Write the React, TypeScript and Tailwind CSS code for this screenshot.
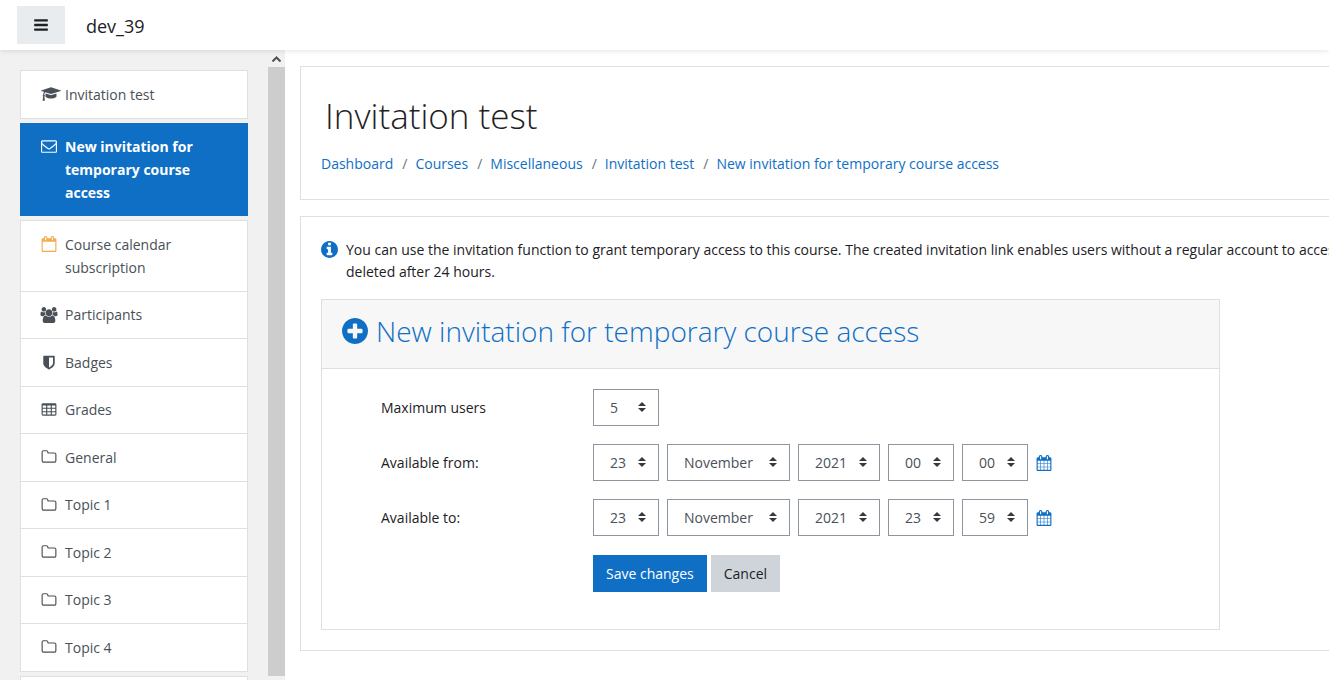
import type { ReactNode } from 'react'
import clsx from 'clsx'

// Font Awesome 4 outlines, drawn on a 1792 unit em
const ICONS = {
  bars: 'M1664 1344v128q0 26-19 45t-45 19h-1408q-26 0-45-19t-19-45v-128q0-26 19-45t45-19h1408q26 0 45 19t19 45zm0-512v128q0 26-19 45t-45 19h-1408q-26 0-45-19t-19-45v-128q0-26 19-45t45-19h1408q26 0 45 19t19 45zm0-512v128q0 26-19 45t-45 19h-1408q-26 0-45-19t-19-45v-128q0-26 19-45t45-19h1408q26 0 45 19t19 45z',
  cap: 'M1774 836l18 316q4 69-82 128t-235 93.5-323 34.5-323-34.5-235-93.5-82-128l18-316 574 181q22 7 48 7t48-7zm530-324q0 23-22 31l-1120 352q-4 1-10 1t-10-1l-652-206q-43 34-71 111.5t-34 178.5q63 36 63 109 0 69-58 107l58 433q2 14-8 25-9 11-24 11h-192q-15 0-24-11-10-11-8-25l58-433q-58-38-58-107 0-73 65-111 11-207 98-330l-333-104q-22-8-22-31t22-31l1120-352q4-1 10-1t10 1l1120 352q22 8 22 31z',
  envelope: 'M1664 1504v-768q-32 36-69 66-268 206-426 338-51 43-83 67t-86.5 48.5-102.5 24.5h-2q-48 0-102.5-24.5t-86.5-48.5-83-67q-158-132-426-338-37-30-69-66v768q0 13 9.5 22.5t22.5 9.5h1472q13 0 22.5-9.5t9.5-22.5zm0-1051v-24.5l-.5-13-3-12.5-5.5-9-9-7.5-14-2.5h-1472q-13 0-22.5 9.5t-9.5 22.5q0 168 147 284 193 152 401 317 6 5 35 29.5t46 37.5 44.5 31.5 50.5 27.5 43 9h2q20 0 43-9t50.5-27.5 44.5-31.5 46-37.5 35-29.5q208-165 401-317 54-43 100.5-115.5t46.5-131.5zm128-37v1088q0 66-47 113t-113 47h-1472q-66 0-113-47t-47-113v-1088q0-66 47-113t113-47h1472q66 0 113 47t47 113z',
  calendarOutline: 'M192 1664h1408v-1024h-1408v1024zm384-1216v-288q0-13-9.5-22.5t-22.5-9.5h-64q-13 0-22.5 9.5t-9.5 22.5v288q0 13 9.5 22.5t22.5 9.5h64q13 0 22.5-9.5t9.5-22.5zm768 0v-288q0-13-9.5-22.5t-22.5-9.5h-64q-13 0-22.5 9.5t-9.5 22.5v288q0 13 9.5 22.5t22.5 9.5h64q13 0 22.5-9.5t9.5-22.5zm384-64v1280q0 52-38 90t-90 38h-1408q-52 0-90-38t-38-90v-1280q0-52 38-90t90-38h128v-96q0-66 47-113t113-47h64q66 0 113 47t47 113v96h384v-96q0-66 47-113t113-47h64q66 0 113 47t47 113v96h128q52 0 90 38t38 90z',
  calendar: 'M192 1664h288v-288h-288v288zm352 0h320v-288h-320v288zm-352-352h288v-320h-288v320zm352 0h320v-320h-320v320zm-352-384h288v-288h-288v288zm736 736h320v-288h-320v288zm-384-736h320v-288h-320v288zm768 736h288v-288h-288v288zm-384-352h320v-320h-320v320zm-352-864v-288q0-13-9.5-22.5t-22.5-9.5h-64q-13 0-22.5 9.5t-9.5 22.5v288q0 13 9.5 22.5t22.5 9.5h64q13 0 22.5-9.5t9.5-22.5zm736 864h288v-320h-288v320zm-384-384h320v-288h-320v288zm384 0h288v-288h-288v288zm32-480v-288q0-13-9.5-22.5t-22.5-9.5h-64q-13 0-22.5 9.5t-9.5 22.5v288q0 13 9.5 22.5t22.5 9.5h64q13 0 22.5-9.5t9.5-22.5zm384-64v1280q0 52-38 90t-90 38h-1408q-52 0-90-38t-38-90v-1280q0-52 38-90t90-38h128v-96q0-66 47-113t113-47h64q66 0 113 47t47 113v96h384v-96q0-66 47-113t113-47h64q66 0 113 47t47 113v96h128q52 0 90 38t38 90z',
  users: 'M529 896q-162 5-265 128h-134q-82 0-138-40.5t-56-118.5q0-353 124-353 6 0 43.5 21t97.5 42.5 119 21.5q67 0 133-23-5 37-5 66 0 139 81 256zm1071 637q0 120-73 189.5t-194 69.5h-874q-121 0-194-69.5t-73-189.5q0-53 3.5-103.5t14-109 26.5-108.5 43-97.5 62-81 85.5-53.5 111.5-20q10 0 43 21.5t73 48 107 48 135 21.5 135-21.5 107-48 73-48 43-21.5q61 0 111.5 20t85.5 53.5 62 81 43 97.5 26.5 108.5 14 109 3.5 103.5zm-1024-1277q0 106-75 181t-181 75-181-75-75-181 75-181 181-75 181 75 75 181zm704 384q0 159-112.5 271.5t-271.5 112.5-271.5-112.5-112.5-271.5 112.5-271.5 271.5-112.5 271.5 112.5 112.5 271.5zm576 225q0 78-56 118.5t-138 40.5h-134q-103-123-265-128 81-117 81-256 0-29-5-66 66 23 133 23 59 0 119-21.5t97.5-42.5 43.5-21q124 0 124 353zm-128-609q0 106-75 181t-181 75-181-75-75-181 75-181 181-75 181 75 75 181z',
  shield: 'M1344 1024v-640h-448v1137q119-63 213-137 235-184 235-360zm192-768v768q0 86-33.5 170.5t-83 150-118 127.5-126.5 103-121 77.5-89.5 49.5-42.5 20q-12 6-26 6t-26-6q-16-7-42.5-20t-89.5-49.5-121-77.5-126.5-103-118-127.5-83-150-33.5-170.5v-768q0-26 19-45t45-19h1152q26 0 45 19t19 45z',
  table: 'M224 128H1568Q1728 128 1728 288V1376Q1728 1536 1568 1536H224Q64 1536 64 1376V288Q64 128 224 128zM192 384V640H576V384zM704 384V640H1088V384zM1216 384V640H1600V384zM192 768V1024H576V768zM704 768V1024H1088V768zM1216 768V1024H1600V768zM192 1152V1408H576V1152zM704 1152V1408H1088V1152zM1216 1152V1408H1600V1152z',
  folder: 'M1600 1312v-704q0-40-28-68t-68-28h-704q-40 0-68-28t-28-68v-64q0-40-28-68t-68-28h-320q-40 0-68 28t-28 68v960q0 40 28 68t68 28h1216q40 0 68-28t28-68zm128-704v704q0 92-66 158t-158 66h-1216q-92 0-158-66t-66-158v-960q0-92 66-158t158-66h320q92 0 158 66t66 158v32h672q92 0 158 66t66 158z',
  info: 'M1152 1376v-160q0-14-9-23t-23-9h-96v-512q0-14-9-23t-23-9h-320q-14 0-23 9t-9 23v160q0 14 9 23t23 9h96v320h-96q-14 0-23 9t-9 23v160q0 14 9 23t23 9h448q14 0 23-9t9-23zm-128-896v-160q0-14-9-23t-23-9h-192q-14 0-23 9t-9 23v160q0 14 9 23t23 9h192q14 0 23-9t9-23zm640 416q0 209-103 385.5t-279.5 279.5-385.5 103-385.5-103-279.5-279.5-103-385.5 103-385.5 279.5-279.5 385.5-103 385.5 103 279.5 279.5 103 385.5z',
  plus: 'M1344 960v-128q0-26-19-45t-45-19h-256v-256q0-26-19-45t-45-19h-128q-26 0-45 19t-19 45v256h-256q-26 0-45 19t-19 45v128q0 26 19 45t45 19h256v256q0 26 19 45t45 19h128q26 0 45-19t19-45v-256h256q26 0 45-19t19-45zm320-64q0 209-103 385.5t-279.5 279.5-385.5 103-385.5-103-279.5-279.5-103-385.5 103-385.5 279.5-279.5 385.5-103 385.5 103 279.5 279.5 103 385.5z',
}

type IconName = keyof typeof ICONS

function Icon({ name, className, viewBox = '0 0 1792 1792' }: { name: IconName; className?: string; viewBox?: string }) {
  return (
    <svg viewBox={viewBox} className={clsx('shrink-0 overflow-visible fill-current', className)} fillRule={name === 'table' ? 'evenodd' : 'nonzero'} aria-hidden="true">
      <path d={ICONS[name]} />
    </svg>
  )
}

const NAV: { label: string; icon: IconName; accent?: boolean }[] = [
  { label: 'Course calendar subscription', icon: 'calendarOutline', accent: true },
  { label: 'Participants', icon: 'users' },
  { label: 'Badges', icon: 'shield' },
  { label: 'Grades', icon: 'table' },
  { label: 'General', icon: 'folder' },
  { label: 'Topic 1', icon: 'folder' },
  { label: 'Topic 2', icon: 'folder' },
  { label: 'Topic 3', icon: 'folder' },
  { label: 'Topic 4', icon: 'folder' },
]

const CRUMBS = ['Dashboard', 'Courses', 'Miscellaneous', 'Invitation test', 'New invitation for temporary course access']

const DATE_PARTS = [
  { key: 'day', width: 'w-[66px]' },
  { key: 'month', width: 'w-[123px]' },
  { key: 'year', width: 'w-[82px]' },
  { key: 'hour', width: 'w-[66px]' },
  { key: 'minute', width: 'w-[66px]' },
]

function Select({ id, label, value, width }: { id: string; label?: string; value: string; width: string }) {
  return (
    <span className={clsx('relative block', width)}>
      <select id={id} aria-label={label} defaultValue={value} className="block h-[37px] w-full appearance-none border border-[#8f959e] bg-white pl-4 text-[#495057]">
        <option>{value}</option>
      </select>
      <svg viewBox="0 0 8 10" className="pointer-events-none absolute top-[13px] right-[13px] h-[10px] w-2 fill-[#343a40]" aria-hidden="true">
        <path d="M4 0L0 4h8zM4 10L0 6h8z" />
      </svg>
    </span>
  )
}

function DateRow({ id, label, values }: { id: string; label: string; values: string[] }) {
  return (
    <fieldset className="flex items-center">
      <legend className="float-left w-[212px] shrink-0">{label}</legend>
      <div className="flex items-center gap-2">
        {DATE_PARTS.map((part, i) => (
          <Select key={part.key} id={`${id}-${part.key}`} label={`${label} ${part.key}`} value={values[i]} width={part.width} />
        ))}
        <a href="#calendar" aria-label="Calendar" className="text-[#0f6fc5]">
          <Icon name="calendar" className="size-4" />
        </a>
      </div>
    </fieldset>
  )
}

function NavLink({ icon, accent, children }: { icon: IconName; accent?: boolean; children: ReactNode }) {
  return (
    <a href="#nav" className="flex gap-2 px-5 py-3">
      <Icon name={icon} viewBox={icon === 'cap' ? '0 0 2304 1792' : undefined} className={clsx('mt-[3px] h-4', icon === 'cap' ? '-mr-1 w-5' : 'w-4', accent && 'text-[#f0ad4e]')} />
      <span>{children}</span>
    </a>
  )
}

export default function App() {
  return (
    <div className="flex h-screen flex-col overflow-hidden bg-white font-['Open_Sans',sans-serif] text-[14px] leading-[22px] text-[#1d2125]">
      <header className="z-10 flex h-[50px] shrink-0 items-center gap-[21px] bg-white pl-[17px] shadow-[0_2px_4px_rgba(0,0,0,0.08)]">
        <button type="button" aria-label="Side panel" className="flex h-[38px] w-12 items-center justify-center bg-[#e9ecef]">
          <Icon name="bars" className="size-4" />
        </button>
        <a href="#home" className="pt-px text-[18px]">dev_39</a>
      </header>

      <div className="flex min-h-0 flex-1">
        <aside className="flex w-[285px] shrink-0 bg-[#f1f1f1]">
          <nav className="flex flex-1 flex-col gap-1 overflow-hidden px-5 pt-5 text-[#495057]">
            <div className="shrink-0 border border-[#dfdfdf] bg-white leading-[23px]">
              <NavLink icon="cap">Invitation test</NavLink>
            </div>
            <div className="shrink-0 border-x border-[#0f6fc5] bg-[#0f6fc5] leading-[23px] font-bold text-white">
              <NavLink icon="envelope">New invitation for temporary course access</NavLink>
            </div>
            <ul className="shrink-0 divide-y divide-[#dfdfdf] border border-[#dfdfdf] bg-white">
              {NAV.map((item) => (
                <li key={item.label} className="leading-[22px] odd:leading-[23px]">
                  <NavLink icon={item.icon} accent={item.accent}>{item.label}</NavLink>
                </li>
              ))}
            </ul>
            <div className="h-12 shrink-0 border border-[#dfdfdf] bg-white" />
          </nav>
          {/* scrollbar */}
          <div className="flex w-[17px] flex-col pb-1">
            <div className="flex h-[17px] items-center justify-center">
              <svg viewBox="0 0 9 6" className="h-[6px] w-[9px] fill-none stroke-[#505050] stroke-2" aria-hidden="true">
                <path d="M.5 5.5l4-4 4 4" />
              </svg>
            </div>
            <div className="flex-1 bg-[#cdcdcd]" />
          </div>
        </aside>

        <main className="flex min-w-0 flex-1 flex-col gap-4 overflow-hidden pt-4 pl-[15px]">
          <section className="border border-r-0 border-[#dfdfdf] px-5 pt-5 pb-6">
            <h1 className="pl-1 text-[35px] leading-[58px] font-light">Invitation test</h1>
            <nav aria-label="Breadcrumb" className="pt-2">
              <ol className="flex">
                {CRUMBS.map((crumb, i) => (
                  <li key={crumb} className="flex">
                    {i > 0 && <span className="pr-2 pl-[9px] text-[#6a737b]">/</span>}
                    <a href="#crumb" className="text-[#0f6fc5]">{crumb}</a>
                  </li>
                ))}
              </ol>
            </nav>
          </section>

          <section className="border border-r-0 border-[#dfdfdf] py-5 pl-5">
            <div className="flex gap-2 overflow-hidden pt-[2px] whitespace-nowrap">
              <Icon name="info" viewBox="128 128 1536 1536" className="mt-[2px] size-[17px] text-[#0f6fc5]" />
              <p>
                You can use the invitation function to grant temporary access to this course. The created invitation link enables users without a regular account to access
                <br />
                deleted after 24 hours.
              </p>
            </div>

            <div className="mt-4 max-w-[899px] border border-[#dfdfdf]">
              <h2 className="flex items-center gap-2 border-b border-[#dfdfdf] bg-[#f7f7f7] px-5 pt-[13px] pb-[19px] text-[28px] leading-9 font-light text-[#0f6fc5]">
                <Icon name="plus" viewBox="128 128 1536 1536" className="size-[26px]" />
                New invitation for temporary course access
              </h2>
              <form className="flex flex-col gap-[18px] px-[59px] pt-5 pb-[37px]">
                <div className="flex items-center">
                  <label htmlFor="max-users" className="w-[212px] shrink-0">Maximum users</label>
                  <Select id="max-users" value="5" width="w-[66px]" />
                </div>
                <DateRow id="from" label="Available from:" values={['23', 'November', '2021', '00', '00']} />
                <DateRow id="to" label="Available to:" values={['23', 'November', '2021', '23', '59']} />
                <div className="flex gap-1 pt-px pl-[212px]">
                  <button type="button" className="h-[37px] bg-[#0f6fc5] px-[13px] text-white">Save changes</button>
                  <button type="button" className="h-[37px] bg-[#ced4da] px-[13px]">Cancel</button>
                </div>
              </form>
            </div>
          </section>
        </main>
      </div>
    </div>
  )
}
